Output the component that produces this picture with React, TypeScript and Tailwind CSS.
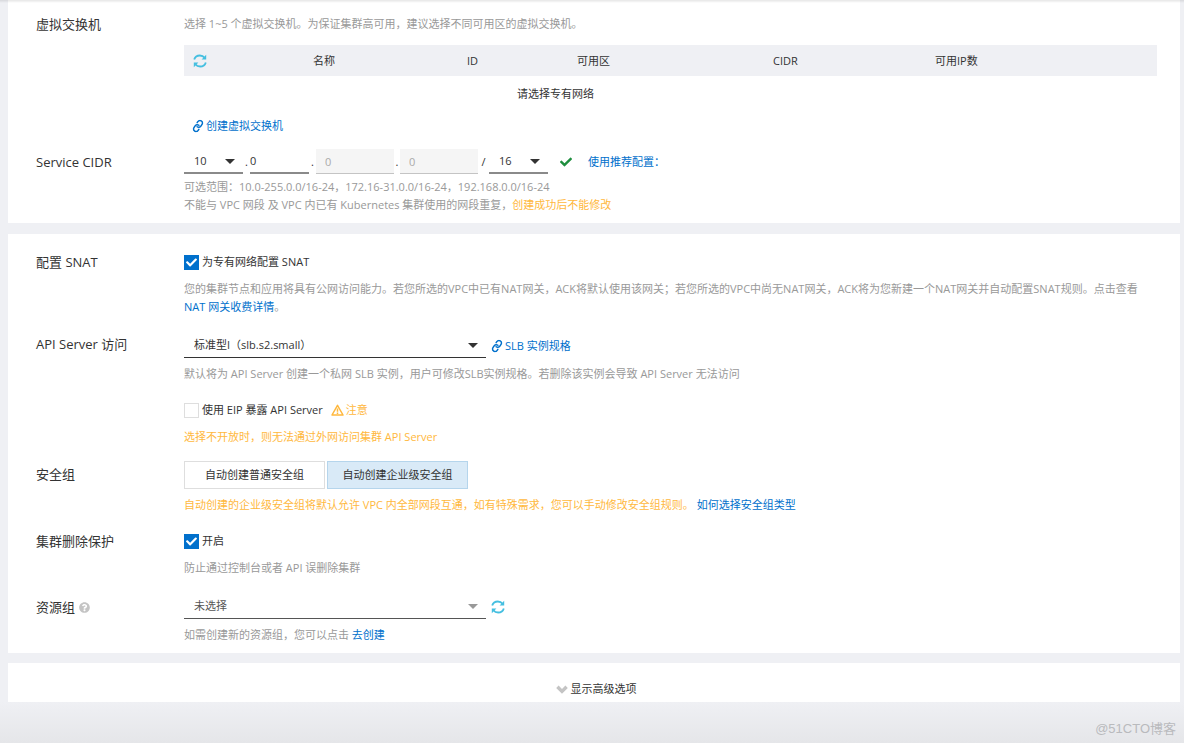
import { useId, useState } from "react"
import clsx from "clsx"
import { Link } from "lucide-react"
import { FaCheck, FaQuestionCircle } from "react-icons/fa"

interface FormRowProps {
    label: string
    htmlFor?: string
    help?: boolean
    className?: string
    labelClassName?: string
    children: React.ReactNode
}

function FormRow({ label, htmlFor, help, className, labelClassName, children }: FormRowProps) {
    return (
        <div className={clsx("flex items-start", className)}>
            <div className={clsx("flex w-[148px] shrink-0 items-center gap-1 text-[13px] leading-[18px]", labelClassName)}>
                {htmlFor ? <label htmlFor={htmlFor}>{label}</label> : <span>{label}</span>}
                {help && <FaQuestionCircle className="size-[11px] text-[#c4c4c4]" />}
            </div>
            <div className="min-w-0 flex-1">{children}</div>
        </div>
    )
}

function Hint({ className, children }: { className?: string; children: React.ReactNode }) {
    return <p className={clsx("leading-[18px]", className)}>{children}</p>
}

function TextLink({ icon, children }: { icon?: boolean; children: React.ReactNode }) {
    return (
        <a href="#" className={clsx("text-[#0070cc]", icon && "inline-flex items-center gap-[2px]")}>
            {icon && <Link className="size-3 -rotate-12" strokeWidth={3} />}
            {children}
        </a>
    )
}

function RefreshIcon() {
    return (
        <svg viewBox="0 0 14 14" className="size-[14px]" fill="none">
            <path d="M1.2 5.6C1.9 3.1 4.2 1.5 6.9 1.5C8.9 1.5 10.5 2.3 11.6 3.7" stroke="#45bfe0" strokeWidth="1.8" />
            <path d="M12.8 8.4C12.1 10.9 9.8 12.5 7.1 12.5C5.1 12.5 3.5 11.7 2.4 10.3" stroke="#45bfe0" strokeWidth="1.8" />
            <path d="M13.2 0.8V5.4H8.6zM0.8 13.2V8.6H5.4z" fill="#45bfe0" />
        </svg>
    )
}

function WarningIcon() {
    return (
        <svg viewBox="0 0 13 12" className="h-3 w-[13px]" fill="none" stroke="currentColor" strokeWidth="1.5">
            <path d="M6.5 1.4L12 11H1z" strokeLinejoin="round" />
            <path d="M6.5 4.5V7.8M6.5 8.6V10" />
        </svg>
    )
}

function ChevronIcon() {
    return (
        <svg viewBox="0 0 12 9" className="h-[9px] w-3" fill="none">
            <path d="M1.4 1.8L6 6.4L10.6 1.8" stroke="#c4c4c4" strokeWidth="3.4" />
        </svg>
    )
}

function RefreshButton({ label }: { label: string }) {
    return (
        <button type="button" aria-label={label} className="block cursor-pointer">
            <RefreshIcon />
        </button>
    )
}

interface SelectProps {
    id?: string
    label?: string
    options: string[]
    className?: string
    arrowClassName?: string
}

function Select({ id, label, options, className, arrowClassName }: SelectProps) {
    return (
        <div className={clsx("relative h-[25px]", className)}>
            <select id={id} aria-label={label} className="size-full appearance-none bg-transparent pr-6 pl-[10px] outline-none">
                {options.map((option) => (
                    <option key={option}>{option}</option>
                ))}
            </select>
            <svg
                viewBox="0 0 10 5"
                className={clsx("pointer-events-none absolute top-[10px] right-2 h-[5px] w-[10px] fill-current", arrowClassName)}
            >
                <path d="M0 0H10L5 5z" />
            </svg>
        </div>
    )
}

interface CheckboxProps {
    children: React.ReactNode
    defaultChecked?: boolean
}

function Checkbox({ children, defaultChecked = false }: CheckboxProps) {
    const id = useId()
    const [checked, setChecked] = useState(defaultChecked)
    return (
        <div className="flex h-[18px] items-center gap-[3px]">
            <span className="relative size-[15px]">
                <input
                    id={id}
                    type="checkbox"
                    checked={checked}
                    onChange={(e) => setChecked(e.target.checked)}
                    className="block size-[15px] appearance-none border border-[#dedede] bg-white checked:border-[#0070cc] checked:bg-[#0070cc]"
                />
                {checked && <FaCheck className="pointer-events-none absolute top-[2px] left-[2px] size-[11px] text-white" />}
            </span>
            <label htmlFor={id}>{children}</label>
        </div>
    )
}

function VSwitchTable() {
    return (
        <table className="mt-3 w-full table-fixed text-left">
            <thead>
                <tr className="h-[31px] bg-[#eff0f4]">
                    <th className="w-[129px] pl-[9px]">
                        <RefreshButton label="刷新虚拟交换机" />
                    </th>
                    <th className="w-[154px] font-normal">名称</th>
                    <th className="w-[110px] font-normal">ID</th>
                    <th className="w-[196px] font-normal">可用区</th>
                    <th className="w-[162px] font-normal">CIDR</th>
                    <th className="font-normal">可用IP数</th>
                </tr>
            </thead>
            <tbody>
                <tr className="h-9">
                    <td colSpan={5} className="pr-2 text-center">请选择专有网络</td>
                    <td />
                </tr>
            </tbody>
        </table>
    )
}

function ServiceCidr() {
    const disabledInput = "h-[25px] w-[78px] border-b border-[#c4c4c4] bg-[#f5f5f5] pl-[9px] text-[#aaa] outline-none"
    return (
        <div className="flex h-[25px] items-center">
            <Select id="cidr" options={["10", "172", "192"]} className="w-[59px] border-b-2 border-[#8a8a8a]" />
            <span className="w-[7px] text-center">.</span>
            <input aria-label="第二段" defaultValue="0" className="h-[25px] w-[59px] border-b-2 border-[#8a8a8a] outline-none" />
            <span className="w-[7px] text-center">.</span>
            <input aria-label="第三段" disabled defaultValue="0" className={disabledInput} />
            <span className="w-[6px] text-center">.</span>
            <input aria-label="第四段" disabled defaultValue="0" className={disabledInput} />
            <span className="w-[11px] text-center">/</span>
            <Select label="掩码" options={["16", "20", "24"]} className="w-[59px] border-b-2 border-[#8a8a8a]" />
            <FaCheck className="ml-3 size-3 text-[#1e8e3e]" />
            <span className="ml-4">
                <TextLink>使用推荐配置：</TextLink>
            </span>
        </div>
    )
}

function SecurityGroup() {
    const groups = ["自动创建普通安全组", "自动创建企业级安全组"]
    const [selected, setSelected] = useState(groups[1])
    return (
        <div className="flex gap-[2px]">
            {groups.map((group) => (
                <button
                    key={group}
                    type="button"
                    onClick={() => setSelected(group)}
                    className={clsx(
                        "h-7 w-[141px] cursor-pointer border",
                        group === selected ? "border-[#b5d5ec] bg-[#d9eaf7]" : "border-[#dedede] bg-white"
                    )}
                >
                    {group}
                </button>
            ))}
        </div>
    )
}

export default function App() {
    return (
        <div className="flex min-h-screen flex-col bg-[#eff0f4] pr-1 pl-2 font-['Open_Sans','Noto_Sans_CJK_SC',sans-serif] text-[11px] leading-[18px] text-[#333]">
            <div className="absolute inset-x-0 top-0 h-[3px] bg-linear-to-b from-black/10 to-transparent" />

            <section className="bg-white pt-[15px] pr-[23px] pb-[9px] pl-7">
                <FormRow label="虚拟交换机">
                    <Hint className="text-[#999]">选择 1~5 个虚拟交换机。为保证集群高可用，建议选择不同可用区的虚拟交换机。</Hint>
                    <VSwitchTable />
                    <div className="mt-[5px] flex pl-2">
                        <TextLink icon>创建虚拟交换机</TextLink>
                    </div>
                </FormRow>

                <FormRow label="Service CIDR" htmlFor="cidr" className="mt-[14px]" labelClassName="mt-1">
                    <ServiceCidr />
                    <Hint className="mt-1 text-[#999]">可选范围：10.0-255.0.0/16-24，172.16-31.0.0/16-24，192.168.0.0/16-24</Hint>
                    <Hint className="text-[#999]">
                        不能与 VPC 网段 及 VPC 内已有 Kubernetes 集群使用的网段重复，
                        <span className="text-[#ffb83d]">创建成功后不能修改</span>
                    </Hint>
                </FormRow>
            </section>

            <section className="mt-[11px] bg-white pt-[19px] pr-[23px] pb-[9px] pl-7">
                <FormRow label="配置 SNAT">
                    <Checkbox defaultChecked>为专有网络配置 SNAT</Checkbox>
                    <Hint className="mt-[9px] text-[#999]">
                        您的集群节点和应用将具有公网访问能力。若您所选的VPC中已有NAT网关，ACK将默认使用该网关；若您所选的VPC中尚无NAT网关，ACK将为您新建一个NAT网关并自动配置SNAT规则。点击查看{" "}
                        <TextLink>NAT 网关收费详情</TextLink>。
                    </Hint>
                </FormRow>

                <FormRow label="API Server 访问" htmlFor="slb" className="mt-[17px]" labelClassName="mt-[2px]">
                    <div className="flex items-center gap-[5px]">
                        <Select
                            id="slb"
                            options={["标准型I（slb.s2.small）", "标准型II（slb.s2.medium）"]}
                            className="w-[302px] border-b border-[#333]"
                        />
                        <TextLink icon>SLB 实例规格</TextLink>
                    </div>
                    <Hint className="mt-[7px] text-[#999]">
                        默认将为 API Server 创建一个私网 SLB 实例，用户可修改SLB实例规格。若删除该实例会导致 API Server 无法访问
                    </Hint>
                    <div className="mt-[18px] flex items-center gap-2">
                        <Checkbox>使用 EIP 暴露 API Server</Checkbox>
                        <span className="flex items-center gap-[2px] text-[#ffb83d]">
                            <WarningIcon />
                            注意
                        </span>
                    </div>
                    <Hint className="mt-[9px] text-[#ffb83d]">选择不开放时，则无法通过外网访问集群 API Server</Hint>
                </FormRow>

                <FormRow label="安全组" className="mt-[15px]" labelClassName="mt-1">
                    <SecurityGroup />
                    <Hint className="mt-[7px] text-[#ffb83d]">
                        自动创建的企业级安全组将默认允许 VPC 内全部网段互通，如有特殊需求，您可以手动修改安全组规则。{" "}
                        <TextLink>如何选择安全组类型</TextLink>
                    </Hint>
                </FormRow>

                <FormRow label="集群删除保护" className="mt-[18px]">
                    <Checkbox defaultChecked>开启</Checkbox>
                    <Hint className="mt-[9px] text-[#999]">防止通过控制台或者 API 误删除集群</Hint>
                </FormRow>

                <FormRow label="资源组" htmlFor="resource-group" help className="mt-[17px]" labelClassName="mt-1">
                    <div className="flex items-center gap-[5px]">
                        <Select
                            id="resource-group"
                            options={["未选择", "默认资源组"]}
                            className="w-[302px] border-b border-[#555] text-[#555]"
                            arrowClassName="text-[#999]"
                        />
                        <RefreshButton label="刷新资源组" />
                    </div>
                    <Hint className="mt-[7px] text-[#999]">
                        如需创建新的资源组，您可以点击 <TextLink>去创建</TextLink>
                    </Hint>
                </FormRow>
            </section>

            <section className="mt-[10px] flex justify-center bg-white pt-[17px] pb-1 pl-1">
                <button type="button" className="flex cursor-pointer items-center gap-[3px]">
                    <ChevronIcon />
                    显示高级选项
                </button>
            </section>

            <footer className="-mr-1 -ml-2 flex flex-1 items-center justify-end bg-linear-to-b from-[#eff0f4] to-[#e5e6e9] pt-3 pr-2 font-['Liberation_Sans','Noto_Sans_CJK_SC',sans-serif] text-[13px] text-[#b9babd]">
                @51CTO博客
            </footer>
        </div>
    )
}
